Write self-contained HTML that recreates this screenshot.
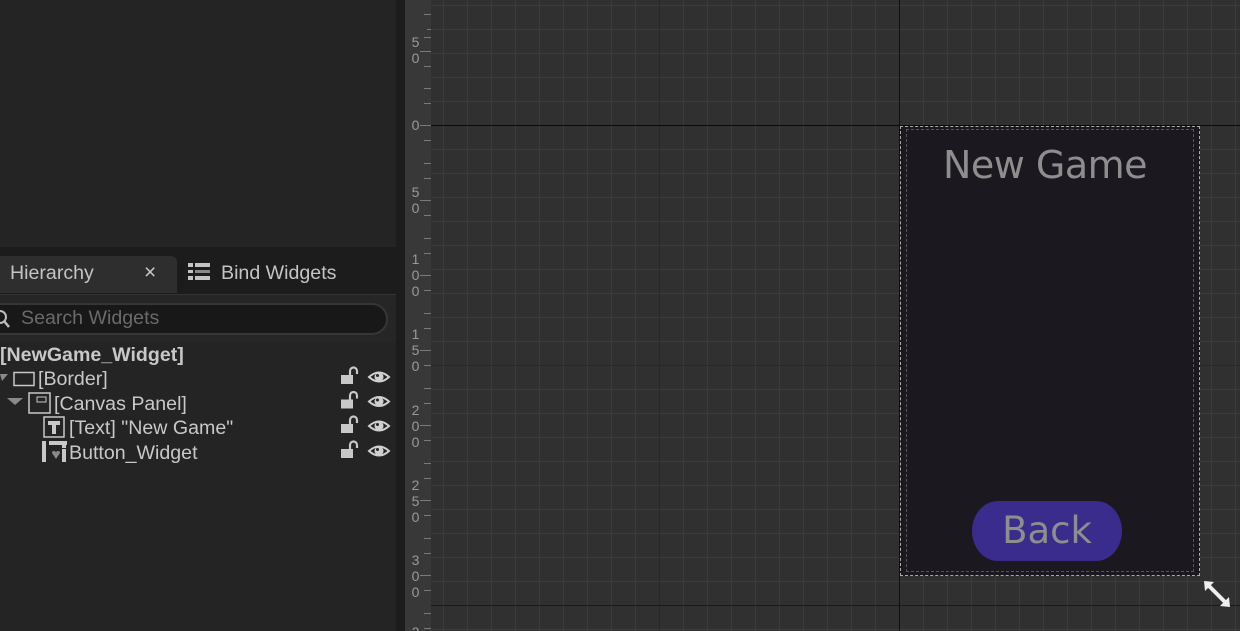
<!DOCTYPE html>
<html><head><style>
*{margin:0;padding:0;box-sizing:border-box}
html,body{width:1240px;height:631px;overflow:hidden}
body{background:#303030;font-family:"Liberation Sans",sans-serif;position:relative}
.abs{position:absolute}
#left{left:0;top:0;width:396px;height:631px;background:#242424}
#sep{left:396px;top:0;width:9px;height:631px;background:#1c1c1c}
#ruler{left:405px;top:0;width:26px;height:631px;background:#383838}
#canvas{left:431px;top:0;width:809px;height:631px;background-color:#303030;
 background-image:
 linear-gradient(to right,#3b3b3b 1px,transparent 1px),
 linear-gradient(to bottom,#3b3b3b 1px,transparent 1px);
 background-size:24px 24px;background-position:12px 5px}
.lbl{position:absolute;left:410px;width:11px;color:#9a9a9a;font-size:14px;line-height:16px;text-align:center}
.tree{position:absolute;left:0;font-size:19.6px;color:#c8c8c8;line-height:24px;white-space:nowrap}
</style></head><body>
<div id="left" class="abs"></div>
<div class="abs" style="left:0;top:247px;width:396px;height:47px;background:#1c1c1c"></div>
<div class="abs" style="left:0;top:256px;width:177px;height:37px;background:#2e2e2e;border-radius:0 6px 0 0"></div>
<div class="abs" style="left:10px;top:262px;font-size:19.6px;color:#c4c4c4">Hierarchy</div>
<div class="abs" style="left:144px;top:261px;font-size:21px;color:#c4c4c4">×</div>
<svg class="abs" style="left:188px;top:262px" width="24" height="22"><g fill="#c4c4c4"><rect x="0" y="1" width="5" height="4"/><rect x="7" y="1" width="15" height="4"/><rect x="0" y="8" width="5" height="3"/><rect x="7" y="8" width="15" height="3" fill="#888"/><rect x="0" y="14" width="5" height="4"/><rect x="7" y="14" width="15" height="4"/></g></svg>
<div class="abs" style="left:221px;top:262px;font-size:19.6px;color:#c4c4c4">Bind Widgets</div>
<div class="abs" style="left:0;top:294px;width:396px;height:48px;background:#262626;border-top:1px solid #333"></div>
<div class="abs" style="left:-20px;top:303px;width:408px;height:32px;background:#181818;border:2px solid #363636;border-radius:16px"></div>
<svg class="abs" style="left:0;top:308px" width="14" height="22"><circle cx="0" cy="9" r="6" fill="none" stroke="#bbb" stroke-width="2"/><line x1="4" y1="13" x2="9" y2="19" stroke="#bbb" stroke-width="2.5"/></svg>
<div class="abs" style="left:21px;top:307px;font-size:19.6px;color:#6a6a6a">Search Widgets</div>
<div class="tree" style="top:343px;font-weight:bold">[NewGame_Widget]</div>
<svg class="abs" style="left:0;top:369px" width="36" height="20"><path d="M0 5 L8 5 L2 12Z" fill="#8a8a8a"/><rect x="14" y="3.5" width="20" height="13" fill="none" stroke="#c8c8c8" stroke-width="1.5"/></svg>
<div class="tree" style="left:38px;top:367px">[Border]</div>
<svg class="abs" style="left:6px;top:392px" width="46" height="24"><path d="M1 6 L17 6 L9 13Z" fill="#8a8a8a"/><rect x="23" y="1" width="21" height="20" fill="none" stroke="#c8c8c8" stroke-width="1.5"/><rect x="31" y="5" width="9" height="5" fill="none" stroke="#c8c8c8" stroke-width="1"/></svg>
<div class="tree" style="left:54px;top:392px">[Canvas Panel]</div>
<svg class="abs" style="left:43px;top:416px" width="24" height="24"><rect x="1" y="1" width="20" height="20" fill="none" stroke="#c8c8c8" stroke-width="1.5"/><path d="M5 5H17V9H13V18H9V9H5Z" fill="#c8c8c8"/></svg>
<div class="tree" style="left:69px;top:416px">[Text] "New Game"</div>
<svg class="abs" style="left:41px;top:441px" width="26" height="22"><rect x="1" y="0" width="4" height="21" fill="#c8c8c8"/><rect x="8" y="0" width="18" height="4" fill="#c8c8c8"/><rect x="21" y="4" width="4" height="3" fill="#c8c8c8"/><rect x="21" y="8" width="4" height="13" fill="#c8c8c8"/><path d="M11 12 a2 2 0 0 1 4 0 a2 2 0 0 1 4 0 L15 18Z" fill="#888"/></svg>
<div class="tree" style="left:69px;top:441px">Button_Widget</div>
<svg class="abs" style="left:340px;top:366px" width="52" height="100">
<defs><g id="r"><rect x="1" y="9" width="12" height="9" fill="#c8c8c8"/><path d="M10 10 V5 a3.5 3.5 0 0 1 7 0 V8" fill="none" stroke="#c8c8c8" stroke-width="2.2"/><path d="M29 11 Q39 2 49 11 Q39 20 29 11Z" fill="none" stroke="#d0d0d0" stroke-width="2"/><circle cx="39" cy="11" r="4.5" fill="#d0d0d0"/><circle cx="37.5" cy="9.5" r="1.5" fill="#242424"/></g></defs>
<use href="#r" y="0"/><use href="#r" y="24.5"/><use href="#r" y="49"/><use href="#r" y="74"/></svg>
<div id="sep" class="abs"></div>
<div id="ruler" class="abs"></div>
<div id="canvas" class="abs"></div>
<div class="abs" style="left:659px;top:0;width:1px;height:631px;background:#282828"></div>
<div class="abs" style="left:431px;top:365px;width:809px;height:1px;background:#282828"></div>
<div class="abs" style="left:431px;top:605px;width:809px;height:1px;background:#1a1a1a"></div>
<div class="abs" style="left:899px;top:0;width:1px;height:631px;background:#111"></div>
<div class="abs" style="left:431px;top:125px;width:809px;height:1px;background:#0a0a0a"></div>
<svg class="abs" style="left:420px;top:0" width="11" height="631"><g stroke="#7a7a7a" stroke-width="1">
<line x1="4" y1="14.5" x2="11" y2="14.5"/><line x1="7" y1="29.5" x2="11" y2="29.5"/><line x1="4" y1="37.5" x2="11" y2="37.5"/>
<line x1="0" y1="51.5" x2="11" y2="51.5"/><line x1="4" y1="66.5" x2="11" y2="66.5"/><line x1="4" y1="88.5" x2="11" y2="88.5"/><line x1="4" y1="103.5" x2="11" y2="103.5"/>
<line x1="0" y1="125.5" x2="11" y2="125.5"/><line x1="4" y1="140.5" x2="11" y2="140.5"/><line x1="4" y1="163.5" x2="11" y2="163.5"/><line x1="4" y1="178.5" x2="11" y2="178.5"/>
<line x1="0" y1="200.5" x2="11" y2="200.5"/><line x1="4" y1="215.5" x2="11" y2="215.5"/><line x1="4" y1="238.5" x2="11" y2="238.5"/><line x1="4" y1="253.5" x2="11" y2="253.5"/>
<line x1="0" y1="275.5" x2="11" y2="275.5"/><line x1="4" y1="290.5" x2="11" y2="290.5"/><line x1="4" y1="313.5" x2="11" y2="313.5"/><line x1="4" y1="328.5" x2="11" y2="328.5"/>
<line x1="0" y1="350.5" x2="11" y2="350.5"/><line x1="4" y1="365.5" x2="11" y2="365.5"/><line x1="4" y1="388.5" x2="11" y2="388.5"/><line x1="4" y1="403.5" x2="11" y2="403.5"/>
<line x1="0" y1="425.5" x2="11" y2="425.5"/><line x1="4" y1="440.5" x2="11" y2="440.5"/><line x1="4" y1="463.5" x2="11" y2="463.5"/><line x1="4" y1="478.5" x2="11" y2="478.5"/>
<line x1="0" y1="500.5" x2="11" y2="500.5"/><line x1="4" y1="515.5" x2="11" y2="515.5"/><line x1="4" y1="538.5" x2="11" y2="538.5"/><line x1="4" y1="553.5" x2="11" y2="553.5"/>
<line x1="0" y1="575.5" x2="11" y2="575.5"/><line x1="4" y1="590.5" x2="11" y2="590.5"/><line x1="4" y1="613.5" x2="11" y2="613.5"/><line x1="4" y1="628.5" x2="11" y2="628.5"/>
</g></svg>
<div class="lbl" style="top:34px">5<br>0</div>
<div class="lbl" style="top:117px">0</div>
<div class="lbl" style="top:184px">5<br>0</div>
<div class="lbl" style="top:251px">1<br>0<br>0</div>
<div class="lbl" style="top:326px">1<br>5<br>0</div>
<div class="lbl" style="top:402px">2<br>0<br>0</div>
<div class="lbl" style="top:477px">2<br>5<br>0</div>
<div class="lbl" style="top:552px">3<br>0<br>0</div>
<div class="lbl" style="top:624px;height:7px;overflow:hidden">3</div>
<div class="abs" style="left:900px;top:126px;width:300px;height:450px;background:#1b181f;border:1px dashed #aaa"></div>
<div class="abs" style="left:906px;top:129px;width:288px;height:443px;border:1px dashed #555"></div>
<div class="abs" style="left:900px;top:143px;width:290px;text-align:center;font-size:38px;color:#8e8e8e;font-family:'DejaVu Sans',sans-serif;letter-spacing:-0.5px">New Game</div>
<div class="abs" style="left:972px;top:501px;width:150px;height:60px;background:#3a2c8c;border-radius:26px/30px;text-align:center;font-size:37px;line-height:60px;color:#8e8e8e;font-family:'DejaVu Sans',sans-serif">Back</div>
<svg class="abs" style="left:1203px;top:580px" width="30" height="30"><g fill="#eee"><path d="M1 1 L11 2 L2 11Z"/><path d="M27 27 L17 26 L26 17Z"/><line x1="5" y1="5" x2="23" y2="23" stroke="#eee" stroke-width="4"/></g></svg>
</body></html>
